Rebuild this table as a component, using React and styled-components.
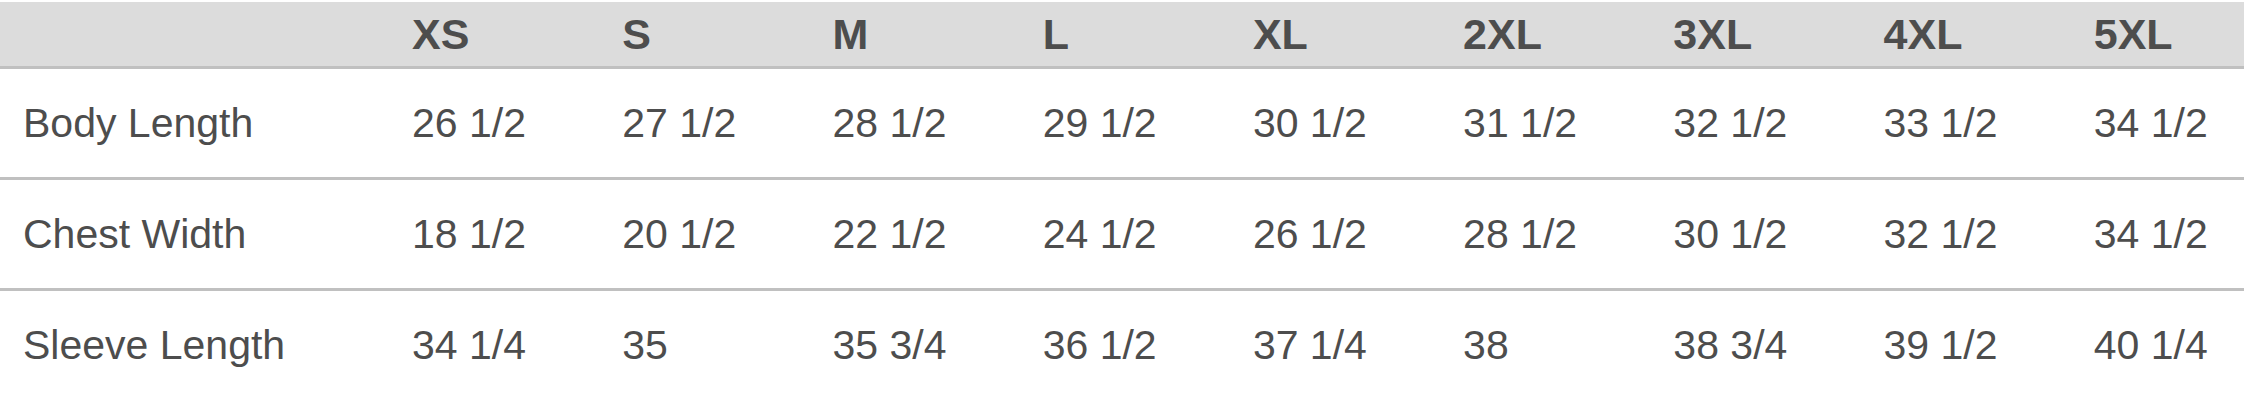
import React from "react";
import styled, { createGlobalStyle } from "styled-components";

const GlobalStyle = createGlobalStyle`
  html, body {
    margin: 0;
    padding: 0;
    background: #ffffff;
  }
  body {
    font-family: "Liberation Sans", Arial, Helvetica, sans-serif;
    color: #4d4d4d;
  }
`;

const Page = styled.div`
  width: 2244px;
  padding-top: 2px;
`;

const Table = styled.div`
  display: flex;
  flex-direction: column;
  width: 100%;
`;

const Row = styled.div`
  display: grid;
  grid-template-columns: 352px repeat(9, 1fr);
  align-items: center;
  height: ${(p) => (p.$head ? "64px" : "108px")};
  background: ${(p) => (p.$head ? "#dcdcdc" : "#ffffff")};
  border-bottom: ${(p) => (p.$last ? "none" : "3px solid #c0c0c0")};
`;

const Cell = styled.div`
  padding-left: ${(p) => (p.$label ? "23px" : "60px")};
  font-size: ${(p) => (p.$head ? "43px" : "41px")};
  font-weight: ${(p) => (p.$head ? 700 : 400)};
  color: #4d4d4d;
  white-space: nowrap;
`;

const sizes = ["XS", "S", "M", "L", "XL", "2XL", "3XL", "4XL", "5XL"];

const rows = [
  {
    label: "Body Length",
    values: ["26 1/2", "27 1/2", "28 1/2", "29 1/2", "30 1/2", "31 1/2", "32 1/2", "33 1/2", "34 1/2"],
  },
  {
    label: "Chest Width",
    values: ["18 1/2", "20 1/2", "22 1/2", "24 1/2", "26 1/2", "28 1/2", "30 1/2", "32 1/2", "34 1/2"],
  },
  {
    label: "Sleeve Length",
    values: ["34 1/4", "35", "35 3/4", "36 1/2", "37 1/4", "38", "38 3/4", "39 1/2", "40 1/4"],
  },
];

export default function App() {
  return (
    <Page>
      <GlobalStyle />
      <Table>
        <Row $head>
          <Cell $label $head />
          {sizes.map((s) => (
            <Cell key={s} $head>
              {s}
            </Cell>
          ))}
        </Row>
        {rows.map((r, i) => (
          <Row key={r.label} $last={i === rows.length - 1}>
            <Cell $label>{r.label}</Cell>
            {r.values.map((v, j) => (
              <Cell key={j}>{v}</Cell>
            ))}
          </Row>
        ))}
      </Table>
    </Page>
  );
}
